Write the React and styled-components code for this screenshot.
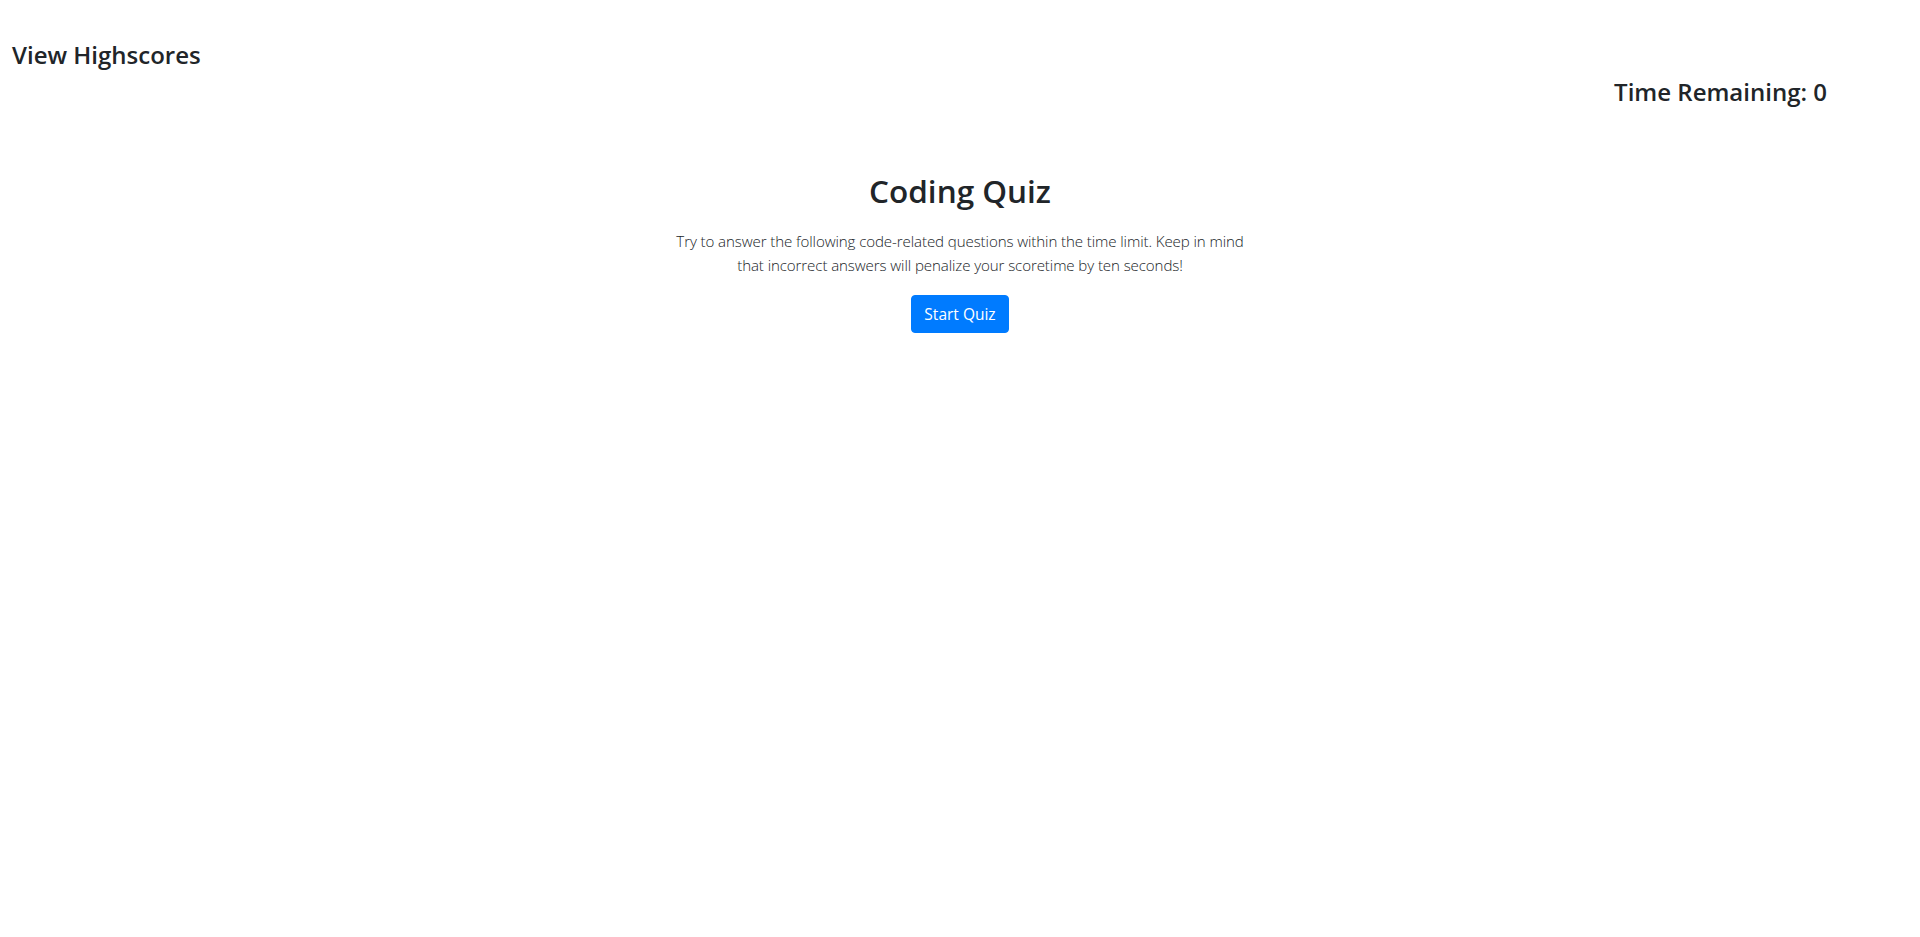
import React from "react";
import styled, { createGlobalStyle } from "styled-components";

const GlobalStyle = createGlobalStyle`
  html, body {
    margin: 0;
    padding: 0;
    background: #fff;
  }
  body {
    font-family: "Open Sans", "Noto Sans", "Liberation Sans", sans-serif;
    color: #212529;
  }
`;

const Page = styled.div`
  display: flex;
  flex-direction: column;
  min-height: 937px;
`;

const Header = styled.header`
  display: flex;
  flex-direction: column;
  padding: 41px 93px 0 12px;
`;

const HighscoresLink = styled.a`
  font-size: 24px;
  font-weight: 600;
  line-height: 1.2;
  color: #212529;
  text-decoration: none;
  cursor: pointer;
  align-self: flex-start;
`;

const Timer = styled.h4`
  margin: 8px 0 0;
  font-size: 24px;
  font-weight: 600;
  line-height: 1.2;
  align-self: flex-end;
`;

const Intro = styled.main`
  display: flex;
  flex-direction: column;
  align-items: center;
  margin-top: 65px;
`;

const Title = styled.h2`
  margin: 0;
  font-size: 31.5px;
  font-weight: 600;
  line-height: 38px;
`;

const Lead = styled.p`
  margin: 19px 0 18px;
  font-size: 15.1px;
  font-weight: 300;
  line-height: 24px;
  letter-spacing: -0.1px;
  text-align: center;
  color: #212529;
`;

const StartButton = styled.button`
  font-family: inherit;
  font-size: 15.5px;
  line-height: 24px;
  padding: 6px 12px;
  color: #fff;
  background: #007bff;
  border: 1px solid #007bff;
  border-radius: 4px;
  cursor: pointer;
`;

export default function App() {
  return (
    <Page>
      <GlobalStyle />
      <Header>
        <HighscoresLink>View Highscores</HighscoresLink>
        <Timer>Time Remaining: 0</Timer>
      </Header>
      <Intro>
        <Title>Coding Quiz</Title>
        <Lead>
          Try to answer the following code-related questions within the time
          limit. Keep in mind
          <br />
          that incorrect answers will penalize your scoretime by ten seconds!
        </Lead>
        <StartButton>Start Quiz</StartButton>
      </Intro>
    </Page>
  );
}
